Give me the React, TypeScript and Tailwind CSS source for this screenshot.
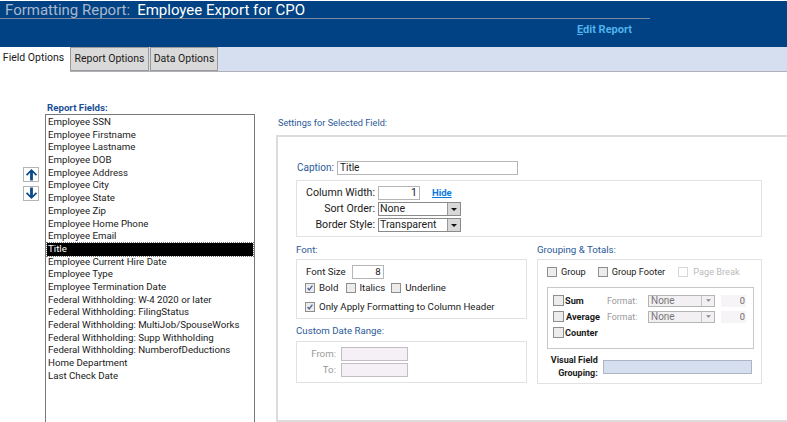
import React from "react";

const fields = ["Employee SSN","Employee Firstname","Employee Lastname","Employee DOB","Employee Address","Employee City","Employee State","Employee Zip","Employee Home Phone","Employee Email","Title","Employee Current Hire Date","Employee Type","Employee Termination Date","Federal Withholding: W-4 2020 or later","Federal Withholding: FilingStatus","Federal Withholding: MultiJob/SpouseWorks","Federal Withholding: Supp Withholding","Federal Withholding: NumberofDeductions","Home Department","Last Check Date"];

function Check({ checked, disabled, className = "" }: { checked?: boolean; disabled?: boolean; className?: string }) {
  return (
    <span className={`inline-flex h-[10px] w-[10px] shrink-0 items-center justify-center border ${disabled ? "border-[#d8d8d8] bg-white" : "border-[#8e8e8e] bg-[#ececec]"} ${className}`}>
      {checked && (
        <svg viewBox="0 0 10 10" className="h-[8px] w-[8px]"><path d="M2 5l2 2.5L8 2" fill="none" stroke="#4a5f9a" strokeWidth="1.6" /></svg>
      )}
    </span>
  );
}

function Select({ value, w }: { value: string; w: string }) {
  return (
    <div className={`flex h-[14px] items-center justify-between border border-[#8a8a8a] bg-white pl-[1px] text-[#222] ${w}`}>
      <span>{value}</span>
      <span className="flex h-full w-[13px] items-center justify-center border-l border-[#999] bg-[#d8d8d8]">
        <svg viewBox="0 0 8 4" className="h-[3px] w-[6px]"><path d="M0 0h8L4 4z" fill="#111" /></svg>
      </span>
    </div>
  );
}

function DisabledSelect() {
  return (
    <div className="flex h-[12px] w-[67px] items-center justify-between border border-[#b5b5b5] bg-[#f3f0f3] pl-[2px] text-[10px] text-[#777]">
      <span>None</span>
      <span className="flex h-full w-[13px] items-center justify-center border-l border-[#c4c4c4]">
        <svg viewBox="0 0 8 4" className="h-[3px] w-[5px]"><path d="M0 0h8L4 4z" fill="#888" /></svg>
      </span>
    </div>
  );
}

function Arrow({ down }: { down?: boolean }) {
  return (
    <div className="flex h-[15px] w-[16px] items-center justify-center border border-[#b4b4b4] bg-white">
      <svg viewBox="0 0 14 14" className={`h-[13px] w-[13px] ${down ? "rotate-180" : ""}`}>
        <path d="M7 1L1 7l1.3 1.3L5.5 5.2V13.5h3V5.2l3.2 3.1L13 7z" fill="#0b4a86" />
      </svg>
    </div>
  );
}

export default function App() {
  return (
    <div className="h-[422px] w-[787px] overflow-hidden bg-white text-[9.7px] leading-[12px] text-[#1a1a1a] [font-family:Roboto,'Noto_Sans',sans-serif]">
      <header className="h-[47px] border-t border-white bg-[#004283]">
        <div className="h-[18px] w-[650px] border-b border-[#7a8aa0] pl-[5px] text-[15px] leading-[18px] text-white">
          <span className="text-[#a9b8cc]">Formatting Report:</span>
          <span className="ml-[7px]">Employee Export for CPO</span>
        </div>
        <div className="mt-[5px] w-[632px] text-right text-[11px] font-bold text-[#4fb3ee]">
          <span className="underline decoration-[#4fb3ee] [text-decoration-skip-ink:none]">E</span>dit Report
        </div>
      </header>

      <nav className="flex h-[25px] items-end border-b border-[#b0b0b8] bg-[#d6dff0] text-[10.5px]">
        <div className="-mb-[1px] flex h-[25px] w-[70px] items-center justify-center bg-white pb-[3px] pr-[3px]">Field Options</div>
        <div className="flex h-[24px] w-[79px] items-center justify-center border border-[#9a9a9a] bg-[#d9d9d9]">Report Options</div>
        <div className="ml-[1px] flex h-[24px] w-[68px] items-center justify-center border border-[#9a9a9a] bg-[#d9d9d9]">Data Options</div>
      </nav>

      <main className="flex pt-[30px]">
        <div className="flex w-[45px] shrink-0 flex-col items-end gap-[4px] pr-[6px] pt-[65px]">
          <Arrow />
          <Arrow down />
        </div>
        <div className="w-[210px] shrink-0">
          <div className="pl-[2px] font-bold text-[#1c4f96]">Report Fields:</div>
          <div className="h-[310px] border border-b-0 border-[#777] px-[1px] pt-[1px]">
            {fields.map((f) =>
              f === "Title" ? (
                <div key={f} className="h-[12.7px] bg-black pl-[1px] leading-[12.7px] text-white outline-1 outline-dotted outline-[#777]">{f}</div>
              ) : (
                <div key={f} className="h-[12.7px] pl-[1px] leading-[12.7px]">{f}</div>
              )
            )}
          </div>
        </div>

        <div className="ml-[21px] flex-1">
          <div className="mt-[15px] pl-[2px] text-[9.2px] text-[#2b5a98]">Settings for Selected Field:</div>
          <div className="mt-[6px] h-[287px] border-2 border-r-0 border-[#dcdcdc] pl-[18px] pt-[24px]">
            <div className="flex h-[14px] items-center pl-[1px] text-[10px]">
              <span className="w-[40px] text-[#2b5a98]">Caption:</span>
              <div className="h-[14px] w-[181px] border border-[#b5b5b5] pl-[2px] leading-[12px]">Title</div>
            </div>
            <div className="mt-[5px] h-[57px] w-[466px] border border-[#e2e2e2] pt-[5px] text-[10.6px]">
              <div className="grid grid-cols-[81px_auto] gap-y-[2px]">
                <div className="flex h-[14px] items-center justify-end pr-[3px]">Column Width:</div>
                <div className="flex items-center">
                  <div className="h-[14px] w-[42px] border border-[#b5b5b5] pr-[2px] text-right">1</div>
                  <span className="ml-[12px] text-[9.5px] font-bold text-[#0a7be0] underline">Hide</span>
                </div>
                <div className="flex h-[14px] items-center justify-end pr-[3px]">Sort Order:</div>
                <Select value="None" w="w-[83px]" />
                <div className="flex h-[14px] items-center justify-end pr-[3px]">Border Style:</div>
                <Select value="Transparent" w="w-[83px]" />
              </div>
            </div>

            <div className="mt-[7px] flex gap-[10px]">
              <div className="w-[231px]">
                <div className="h-[14px] text-[#2b5a98]">Font:</div>
                <div className="mt-[1px] h-[60px] border border-[#e2e2e2] pl-[8px] pt-[5px]">
                  <div className="flex h-[14px] items-center pl-[1px]">
                    <span>Font Size</span>
                    <div className="ml-[6px] h-[14px] w-[32px] border border-[#b5b5b5] pr-[2px] text-right">8</div>
                  </div>
                  <div className="mt-[2px] flex h-[14px] items-center">
                    <Check checked /><span className="ml-[4px] mr-[8px]">Bold</span>
                    <Check /><span className="ml-[3px] mr-[6px]">Italics</span>
                    <Check /><span className="ml-[4px]">Underline</span>
                  </div>
                  <div className="mt-[5px] flex h-[14px] items-center">
                    <Check checked /><span className="ml-[4px]">Only Apply Formatting to Column Header</span>
                  </div>
                </div>
                <div className="mt-[6px] h-[14px] text-[#2b5a98]">Custom Date Range:</div>
                <div className="mt-[2px] h-[42px] border border-[#e2e2e2] pt-[5px]">
                  <div className="grid grid-cols-[44px_67px] items-center gap-y-[2px] text-[#999]">
                    <span className="pr-[5px] text-right">From:</span>
                    <div className="h-[14px] border border-[#c4bec4] bg-[#f5f0f5]" />
                    <span className="pr-[5px] text-right">To:</span>
                    <div className="h-[14px] border border-[#c4bec4] bg-[#f5f0f5]" />
                  </div>
                </div>
              </div>

              <div className="w-[225px]">
                <div className="h-[14px] text-[#2b5a98]">Grouping &amp; Totals:</div>
                <div className="mt-[1px] h-[125px] border border-[#e2e2e2] px-[9px] pt-[5px]">
                  <div className="flex h-[14px] items-center text-[9.2px]">
                    <Check /><span className="ml-[4px] mr-[12px]">Group</span>
                    <Check /><span className="ml-[4px] mr-[13px]">Group Footer</span>
                    <Check disabled /><span className="ml-[5px] text-[#bbb]">Page Break</span>
                  </div>
                  <div className="mt-[8px] h-[62px] w-[207px] border border-[#c8c8c8] pl-[5px] pt-[6px]">
                    <div className="grid grid-cols-[54px_41px_67px_25px] items-center gap-y-[3px] text-[9.2px]">
                      <div className="flex h-[13px] items-center font-bold"><Check className="mr-[1px] h-[11px] w-[11px]" />Sum</div>
                      <span className="text-[8.8px] text-[#999]">Format:</span>
                      <DisabledSelect />
                      <div className="ml-[6px] h-[12px] w-[25px] bg-[#f7f4f7] pr-[1px] text-right text-[#666]">0</div>
                      <div className="flex h-[13px] items-center font-bold"><Check className="mr-[2px] h-[11px] w-[11px]" />Average</div>
                      <span className="text-[8.8px] text-[#999]">Format:</span>
                      <DisabledSelect />
                      <div className="ml-[6px] h-[12px] w-[25px] bg-[#f7f4f7] pr-[1px] text-right text-[#666]">0</div>
                      <div className="flex h-[13px] items-center font-bold"><Check className="mr-[1px] h-[11px] w-[11px]" />Counter</div>
                    </div>
                  </div>
                  <div className="mt-[5px] flex items-center">
                    <div className="w-[51px] whitespace-nowrap text-right text-[9px] font-bold leading-[12.5px]">Visual Field<br />Grouping:</div>
                    <div className="ml-[5px] h-[14px] w-[150px] border border-[#aeb4c2] bg-[#d6dff0]" />
                  </div>
                </div>
              </div>
            </div>
          </div>
        </div>
      </main>
    </div>
  );
}
